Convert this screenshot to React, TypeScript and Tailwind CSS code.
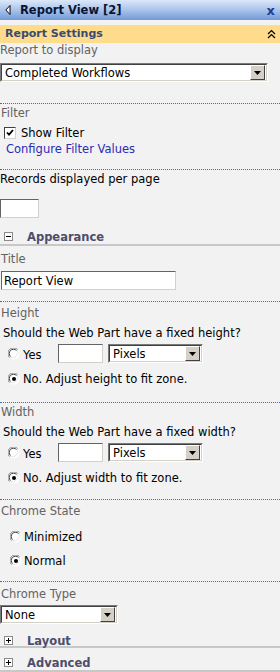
import type { ReactNode } from "react";

const font = { fontFamily: '"DejaVu Sans", Verdana, sans-serif' };

function Dotted() {
  return <div className="border-t border-dotted border-[#3d6bc4]" />;
}

function Label({ children }: { children: ReactNode }) {
  return <div className="h-[14px] text-[11.5px] leading-[14px] text-[#636363]">{children}</div>;
}

function Text({ children, className = "" }: { children: ReactNode; className?: string }) {
  return <span className={`text-[11.5px] leading-[14px] text-black ${className}`}>{children}</span>;
}

function SelectBox({ value, width }: { value: string; width: string }) {
  return (
    <div
      className={`flex h-[19px] items-stretch border border-t-[#7a7a7a] border-l-[#7a7a7a] border-r-white border-b-white bg-white ${width}`}
    >
      <div className="flex flex-1 items-center border border-t-[#404040] border-l-[#404040] border-r-[#d4d0c8] border-b-[#d4d0c8] pl-[3px] pr-[1px]">
        <Text className="flex-1">{value}</Text>
        <span className="flex h-[15px] w-[15px] items-center justify-center border border-t-white border-l-white border-r-[#404040] border-b-[#404040] bg-[#d4d0c8]">
          <svg width="7" height="4" viewBox="0 0 7 4">
            <path d="M0 0h7L3.5 4z" fill="#000" />
          </svg>
        </span>
      </div>
    </div>
  );
}

function TextBox({ value, width }: { value?: string; width: string }) {
  return (
    <div
      className={`flex h-[19px] items-center border border-t-[#646464] border-l-[#646464] border-r-[#d4d0c8] border-b-[#d4d0c8] bg-white px-[2px] ${width}`}
    >
      {value ? <Text>{value}</Text> : null}
    </div>
  );
}

function Radio({ checked }: { checked?: boolean }) {
  return (
    <svg width="12" height="12" viewBox="0 0 12 12" className="shrink-0">
      <circle cx="6" cy="6" r="5.5" fill="#fff" />
      <path d="M1.5 9.5A5.5 5.5 0 0 1 9.5 1.5" fill="none" stroke="#808080" strokeWidth="1" />
      <path d="M2.5 8.5A4.2 4.2 0 0 1 8.5 2.5" fill="none" stroke="#404040" strokeWidth="1" />
      <path d="M9.5 2.5A5.5 5.5 0 0 1 2.5 9.5" fill="none" stroke="#e4e4e4" strokeWidth="1" />
      {checked ? <circle cx="6" cy="6" r="2" fill="#000" /> : null}
    </svg>
  );
}

function SectionToggle({ label, open, pt, pb }: { label: string; open?: boolean; pt: string; pb: string }) {
  return (
    <div className={`border-b-2 border-[#c8c8c8] pl-[4px] ${pt} ${pb}`}>
      <div className="flex h-[9px] items-center">
        <span className="flex h-[9px] w-[9px] items-center justify-center border border-[#8a8a8a] bg-white">
          <svg width="7" height="7" viewBox="0 0 7 7">
            <path d="M1 3.5h5" stroke="#000" strokeWidth="1" />
            {open ? null : <path d="M3.5 1v5" stroke="#000" strokeWidth="1" />}
          </svg>
        </span>
        <span className="ml-[14px] text-[11.5px] font-bold leading-[14px] text-[#4d4d6b]">{label}</span>
      </div>
    </div>
  );
}

function FixedSize({ dim }: { dim: string }) {
  return (
    <div>
      <div className="mt-[6px] h-[14px] pl-[3px]">
        <Text>Should the Web Part have a fixed {dim}?</Text>
      </div>
      <div className="mt-[4px] flex h-[19px] items-center">
        <span className="ml-[8px]">
          <Radio />
        </span>
        <Text className="ml-[3px] mt-[2px] w-[35px]">Yes</Text>
        <TextBox width="w-[45px]" />
        <span className="ml-[5px]">
          <SelectBox value="Pixels" width="w-[95px]" />
        </span>
      </div>
      <div className="mt-[9px] flex h-[14px] items-center">
        <span className="ml-[8px]">
          <Radio checked />
        </span>
        <Text className="ml-[3px]">No. Adjust {dim} to fit zone.</Text>
      </div>
    </div>
  );
}

export default function App() {
  return (
    <div className="h-[672px] w-[280px] overflow-hidden bg-[#f2f2f2] text-[11.5px] leading-[14px]" style={font}>
      <div className="flex h-[20px] items-center bg-gradient-to-b from-[#dce8f8] via-[#a9c3ea] to-[#7199d9] pl-[5px] pr-[5px]">
        <svg width="6" height="10" viewBox="0 0 6 10">
          <path d="M5 0.5L0.8 5 5 9.5z" fill="#fff" stroke="#000" strokeWidth="1" />
        </svg>
        <span className="ml-[9px] text-[11.5px] font-bold text-[#0a1433]">Report View [2]</span>
        <span className="ml-auto text-[13px] font-bold leading-none text-[#1b3e96]">x</span>
      </div>
      <div className="h-[5px]" />
      <div className="flex h-[18px] items-center bg-[#fedc8b] pl-[5px] pr-[4px]">
        <span className="text-[11px] font-bold text-[#3b4a70]">Report Settings</span>
        <svg className="ml-auto" width="9" height="10" viewBox="0 0 9 10">
          <path d="M1 5L4.5 1.5 8 5M1 9L4.5 5.5 8 9" fill="none" stroke="#000" strokeWidth="1.2" />
        </svg>
      </div>

      <Label>Report to display</Label>
      <div className="mt-[6px]">
        <SelectBox value="Completed Workflows" width="w-[268px]" />
      </div>
      <div className="h-[21px]" />
      <Dotted />

      <div className="mt-[2px] pl-[1px]">
        <Label>Filter</Label>
      </div>
      <div className="mt-[6px] flex h-[14px] items-center pl-[4px]">
        <span className="flex h-[12px] w-[12px] items-center justify-center border border-t-[#404040] border-l-[#404040] border-r-[#d4d0c8] border-b-[#d4d0c8] bg-white">
          <svg width="8" height="8" viewBox="0 0 8 8">
            <path d="M1 3.5l2 2.2L7 1" fill="none" stroke="#000" strokeWidth="1.8" />
          </svg>
        </span>
        <Text className="ml-[5px]">Show Filter</Text>
      </div>
      <div className="mt-[2px] h-[14px] pl-[6px] text-[11.5px] leading-[14px] text-[#2a2ab5]">Configure Filter Values</div>
      <div className="h-[13px]" />
      <Dotted />

      <div className="mt-[2px] h-[14px]">
        <Text>Records displayed per page</Text>
      </div>
      <div className="mt-[13px]">
        <TextBox width="w-[39px]" />
      </div>
      <SectionToggle label="Appearance" open pt="pt-[14px]" pb="pb-[3px]" />

      <div className="mt-[6px] pl-[1px]">
        <Label>Title</Label>
      </div>
      <div className="mt-[5px] pl-[1px]">
        <TextBox value="Report View" width="w-[175px]" />
      </div>
      <div className="h-[11px]" />
      <Dotted />

      <div className="mt-[4px] pl-[1px]">
        <Label>Height</Label>
      </div>
      <FixedSize dim="height" />
      <div className="h-[16px]" />
      <Dotted />

      <div className="mt-[2px] pl-[1px]">
        <Label>Width</Label>
      </div>
      <FixedSize dim="width" />
      <div className="h-[14px]" />
      <Dotted />

      <div className="mt-[4px] pl-[1px]">
        <Label>Chrome State</Label>
      </div>
      <div className="mt-[12px] flex h-[14px] items-center pl-[10px]">
        <Radio />
        <Text className="ml-[2px]">Minimized</Text>
      </div>
      <div className="mt-[10px] flex h-[14px] items-center pl-[10px]">
        <Radio checked />
        <Text className="ml-[2px]">Normal</Text>
      </div>
      <div className="h-[13px]" />
      <Dotted />

      <div className="mt-[5px] pl-[1px]">
        <Label>Chrome Type</Label>
      </div>
      <div className="mt-[4px]">
        <SelectBox value="None" width="w-[118px]" />
      </div>
      <SectionToggle label="Layout" pt="pt-[12px]" pb="pb-[1px]" />
      <SectionToggle label="Advanced" pt="pt-[10px]" pb="pb-[3px]" />
    </div>
  );
}
